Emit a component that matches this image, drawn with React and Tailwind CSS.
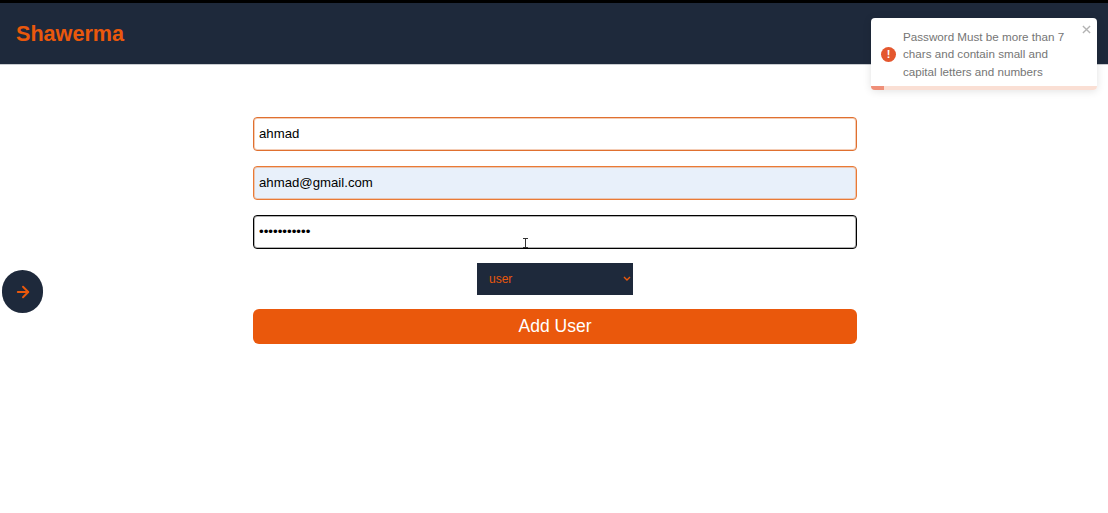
import { ArrowRight } from "lucide-react";

function Toast() {
    return (
        <div className="absolute top-[18px] left-[871px] w-[226px] h-[72px] bg-white rounded-[4px] shadow-[0_1px_8px_rgba(0,0,0,0.12)] overflow-hidden">
            <div className="flex items-center h-[72px] pl-[10px] pr-[24px]">
                <div className="w-[15px] h-[15px] shrink-0 rounded-full bg-[#e4572e] text-white text-[11px] font-bold flex items-center justify-center">
                    !
                </div>
                <p className="ml-[7px] text-[11.65px] leading-[17.5px] text-[#757575]">
                    Password Must be more than 7 chars and contain small and capital letters and numbers
                </p>
            </div>
            <button className="absolute top-[7px] right-[6px] text-[#b3b3b3]">
                <svg width="9" height="9" viewBox="0 0 10 10" fill="none" stroke="currentColor" strokeWidth="1.5">
                    <path d="M1 1l8 8M9 1l-8 8" />
                </svg>
            </button>
            <div className="absolute left-0 right-0 bottom-0 h-[4px] bg-[#fadfd4]">
                <div className="w-[13px] h-full bg-[#ef8f78]"></div>
            </div>
        </div>
    );
}

export default function App() {
    return (
        <div className="relative min-h-[513px] bg-white font-['Liberation_Sans',Arial,sans-serif] overflow-hidden">
            <header className="h-[65px] bg-[#1e293b] border-t-[3px] border-black border-b border-b-[#c9ccd0] flex items-center pl-[16px]">
                <h1 className="text-[21.6px] font-bold text-[#ea580c] mt-[2px]">Shawerma</h1>
            </header>

            <Toast />

            <button className="absolute left-[2px] top-[270px] w-[41px] h-[43px] rounded-full bg-[#1e293b] flex items-center justify-center text-[#ea580c]">
                <ArrowRight size={18} strokeWidth={2.5} />
            </button>

            <form className="w-[604px] ml-[253px] mt-[52px] flex flex-col items-center">
                <input
                    readOnly
                    value="ahmad"
                    className="w-full h-[34px] px-[5px] pb-[1px] rounded-[4px] border border-[#e0702f] shadow-[inset_0_0_0_1px_rgba(224,112,47,0.35)] text-[13.2px] text-black outline-none"
                />
                <input
                    readOnly
                    value="ahmad@gmail.com"
                    className="w-full h-[34px] mt-[15px] px-[5px] pb-[1px] rounded-[4px] border border-[#ea7a35] shadow-[inset_0_0_0_1px_rgba(234,122,53,0.35)] bg-[#e8f0fa] text-[13.2px] text-black outline-none"
                />
                <input
                    readOnly
                    type="password"
                    value="ahmad123456"
                    className="w-full h-[34px] mt-[15px] px-[5px] pb-[1px] rounded-[4px] border border-black shadow-[inset_0_0_0_1px_rgba(0,0,0,0.3)] text-[13.33px] text-black outline-none"
                />
                <div className="relative w-[156px] h-[32px] mt-[14px] bg-[#1e293b] text-[#ea580c] text-[12px] flex items-center pl-[12px]">
                    <span>user</span>
                    <svg className="absolute right-[2px] top-[13px]" width="8" height="6" viewBox="0 0 8 6" fill="none" stroke="currentColor" strokeWidth="1.4">
                        <path d="M1 1l3 3 3-3" />
                    </svg>
                </div>
                <button type="button" className="w-full h-[35px] mt-[14px] rounded-[6px] bg-[#ea580c] text-white text-[17.5px]">
                    Add User
                </button>
            </form>

            <svg className="absolute left-[522px] top-[238px]" width="7" height="10" viewBox="0 0 7 10" fill="none" stroke="#333" strokeWidth="1">
                <path d="M1 .5h5M3.5.5v9M1 9.5h5" />
            </svg>
        </div>
    );
}
